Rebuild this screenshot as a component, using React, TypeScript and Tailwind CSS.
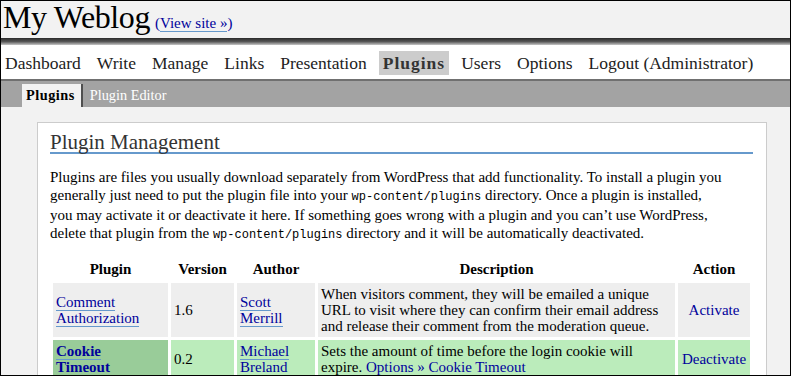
import React from 'react';

const navItems = ['Dashboard', 'Write', 'Manage', 'Links', 'Presentation', 'Plugins', 'Users', 'Options', 'Logout (Administrator)'];

const link = 'text-[#00019b] border-b border-[#6699cc]';
const code = "font-['Liberation_Mono',monospace] text-[12px]";

const App = () => {
  return (
    <div className="w-[791px] h-[376px] overflow-hidden border border-black bg-[#f2f2f2] font-['Liberation_Serif',serif] text-black">
      {/* header */}
      <div className="h-[37px] flex items-baseline pl-[2px] bg-[#f2f2f2]">
        <h1 className="text-[32px] leading-[32px] tracking-[-0.4px] text-black">My Weblog</h1>
        <span className="ml-[5px] text-[15px] text-[#00019b]">
          (<a className={link}>View site »</a>)
        </span>
      </div>
      <div className="h-[7px] bg-gradient-to-b from-[#2a2a2a] via-[#555] to-[#c8c8c8]" />

      {/* admin menu */}
      <ul className="h-[34px] flex items-start pt-[6px] gap-[8px] bg-white text-[17.5px] text-[#222]">
        {navItems.map((item) => (
          <li key={item}>
            <a
              className={
                item === 'Plugins'
                  ? 'block px-[4px] leading-[24px] bg-[#ccc] font-bold tracking-[1px] text-[#333]'
                  : 'block px-[4px] leading-[24px]'
              }
            >
              {item}
            </a>
          </li>
        ))}
      </ul>
      <div className="h-[2px] bg-[#707070]" />

      {/* submenu */}
      <div className="h-[26px] flex items-end pl-[21px] bg-[#a3a3a3] text-[14.3px]">
        <a className="h-[23px] leading-[23px] pl-[4px] pr-[6px] bg-[#f2f2f2] border-r-2 border-[#4f4f4f] font-bold tracking-[0.5px] text-black">
          Plugins
        </a>
        <a className="h-[23px] leading-[23px] pl-[7px] text-white">Plugin Editor</a>
      </div>

      {/* content */}
      <div className="pt-[15px] ml-[36px] mr-[23px]">
        <div className="bg-white border border-[#ccc] pt-[9px] pl-[12px] pr-[13px] pb-[20px]">
          <h2 className="text-[21px] leading-[20px] text-[#333] border-b-2 border-[#6699cc]">Plugin Management</h2>
          <p className="mt-[14px] text-[15px] leading-[18px] whitespace-nowrap">
            Plugins are files you usually download separately from WordPress that add functionality. To install a plugin you
            <br />
            generally just need to put the plugin file into your <code className={code}>wp-content/plugins</code> directory. Once a plugin is installed,
            <br />
            you may activate it or deactivate it here. If something goes wrong with a plugin and you can’t use WordPress,
            <br />
            delete that plugin from the <code className={code}>wp-content/plugins</code> directory and it will be automatically deactivated.
          </p>

          <table className="mt-[11px] w-[703px] table-fixed border-separate border-spacing-[3px] text-[15px] leading-[16px]">
            <thead>
              <tr>
                <th className="w-[115px] py-[3px] font-bold">Plugin</th>
                <th className="w-[63px] py-[3px] font-bold">Version</th>
                <th className="w-[78px] py-[3px] font-bold">Author</th>
                <th className="w-[357px] py-[3px] font-bold">Description</th>
                <th className="w-[72px] py-[3px] font-bold">Action</th>
              </tr>
            </thead>
            <tbody>
              <tr className="bg-[#eee]">
                <td className="p-[3px] align-middle">
                  <a className={link}>Comment<br />Authorization</a>
                </td>
                <td className="p-[3px] align-middle">1.6</td>
                <td className="p-[3px] align-middle">
                  <a className={link}>Scott<br />Merrill</a>
                </td>
                <td className="p-[3px] align-middle whitespace-nowrap">
                  When visitors comment, they will be emailed a unique
                  <br />
                  URL to visit where they can confirm their email address
                  <br />
                  and release their comment from the moderation queue.
                </td>
                <td className="p-[3px] align-middle text-center">
                  <a className="text-[#00019b]">Activate</a>
                </td>
              </tr>
              <tr className="bg-[#bbecbb]">
                <td className="p-[3px] align-middle bg-[#99cc99]">
                  <a className={`${link} font-bold`}>Cookie<br />Timeout</a>
                </td>
                <td className="p-[3px] align-middle">0.2</td>
                <td className="p-[3px] align-middle">
                  <a className={link}>Michael<br />Breland</a>
                </td>
                <td className="p-[3px] align-middle whitespace-nowrap">
                  Sets the amount of time before the login cookie will
                  <br />
                  expire. <a className={link}>Options » Cookie Timeout</a>
                </td>
                <td className="p-[3px] align-middle text-center">
                  <a className="text-[#00019b]">Deactivate</a>
                </td>
              </tr>
            </tbody>
          </table>
        </div>
      </div>
    </div>
  );
};

export default App;
